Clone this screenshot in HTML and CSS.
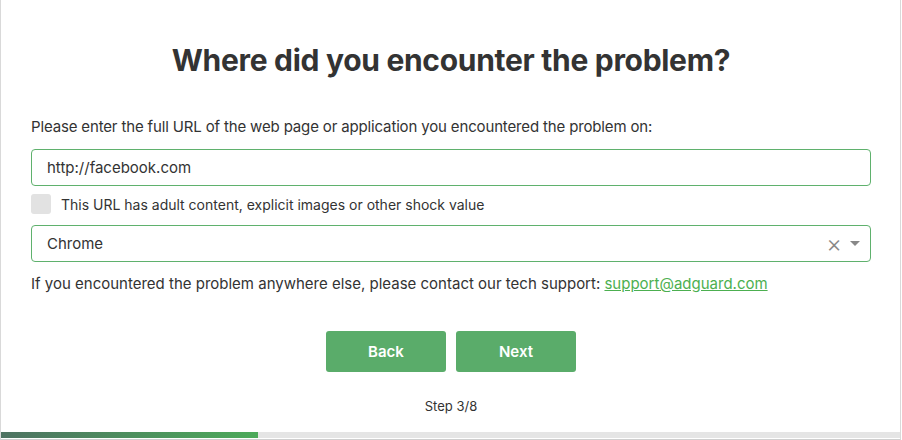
FILE: index.html
```html
<!DOCTYPE html>
<html>
<head>
<meta charset="utf-8">
<link rel="stylesheet" href="styles.css">
</head>
<body>
<div class="card">
  <div class="content">
    <h1 class="title">Where did you encounter the problem?</h1>
    <p class="label">Please enter the full URL of the web page or application you encountered the problem on:</p>
    <div class="field">http://facebook.com</div>
    <label class="check">
      <span class="box"></span>
      <span class="check-text">This URL has adult content, explicit images or other shock value</span>
    </label>
    <div class="field select">
      <span class="select-value">Chrome</span>
      <span class="clear">×</span>
      <span class="arrow"></span>
    </div>
    <p class="note">If you encountered the problem anywhere else, please contact our tech support: <a class="link" href="#">support@adguard.com</a></p>
    <div class="buttons">
      <button class="btn">Back</button>
      <button class="btn">Next</button>
    </div>
    <div class="step">Step 3/8</div>
  </div>
  <div class="progress"><div class="progress-fill" style="width: 28.6%"></div></div>
</div>
</body>
</html>
```

FILE: styles.css
```css
* { box-sizing: border-box; }
html, body {
  margin: 0;
  padding: 0;
  background: #fff;
}
body {
  width: 902px;
  height: 440px;
  font-family: Inter, "Liberation Sans", sans-serif;
  color: #333;
}
.card {
  width: 901px;
  height: 440px;
  border-left: 1px solid #d9d9d9;
  border-right: 1px solid #d9d9d9;
  border-bottom: 1px solid #cfcfcf;
  display: flex;
  flex-direction: column;
}
.content {
  flex: 1;
  padding: 40px 29px 0 30px;
  display: flex;
  flex-direction: column;
}
.title {
  margin: 0;
  font-size: 30px;
  font-weight: 700;
  text-align: center;
  letter-spacing: -0.3px;
  line-height: 40px;
  color: #333;
}
.label {
  margin: 37px 0 0;
  font-size: 15px;
  line-height: 20px;
  letter-spacing: -0.15px;
}
.field {
  margin-top: 12px;
  height: 37px;
  border: 1px solid #5fb16d;
  border-radius: 4px;
  padding: 0 10px 0 15px;
  display: flex;
  align-items: center;
  font-size: 15px;
}
.check {
  margin-top: 7px;
  display: flex;
  align-items: center;
  gap: 10px;
  height: 22px;
}
.box {
  width: 20px;
  height: 20px;
  background: #e2e2e2;
  border-radius: 3px;
}
.check-text {
  font-size: 14px;
}
.select {
  margin-top: 10px;
}
.select-value { flex: 1; }
.clear {
  color: #888;
  font-size: 24px;
  font-weight: 300;
  margin-right: 8px;
  line-height: 1;
}
.arrow {
  width: 0;
  height: 0;
  border-left: 5px solid transparent;
  border-right: 5px solid transparent;
  border-top: 5px solid #888;
}
.note {
  margin: 12px 0 0;
  font-size: 15px;
  line-height: 20px;
}
.link {
  color: #4caf50;
  text-decoration: underline;
}
.buttons {
  margin-top: 37px;
  display: flex;
  justify-content: center;
  gap: 10px;
}
.btn {
  width: 120px;
  height: 41px;
  background: #5aac6a;
  color: #fff;
  border: none;
  border-radius: 3px;
  font-family: inherit;
  font-size: 15px;
  font-weight: 600;
}
.step {
  margin-top: 26px;
  text-align: center;
  font-size: 13px;
}
.progress {
  height: 6px;
  background: #e5e5e5;
  margin-bottom: 1px;
}
.progress-fill {
  height: 100%;
  background: linear-gradient(to right, #4e7362, #4caa5a);
}
```
